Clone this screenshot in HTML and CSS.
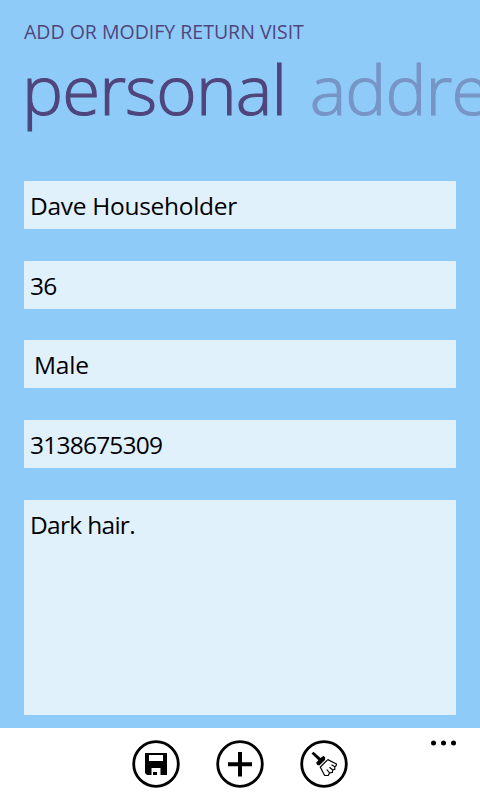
FILE: index.html
```html
<!DOCTYPE html>
<html lang="en">
<head>
<meta charset="utf-8">
<title>Add or modify return visit</title>
<link rel="stylesheet" href="styles.css">
</head>
<body>
<div class="page">
  <header class="header">
    <div class="app-title">ADD OR MODIFY RETURN VISIT</div>
    <nav class="pivot"><span class="pivot-item active">personal</span><span class="pivot-item next">addre</span></nav>
  </header>
  <main class="form">
    <div class="field"><span class="name">Dave Householder</span></div>
    <div class="field"><span class="number">36</span></div>
    <div class="field select"><span class="choice">Male</span></div>
    <div class="field"><span class="number">3138675309</span></div>
    <div class="field notes"><span class="note">Dark hair.</span></div>
  </main>
  <footer class="appbar">
    <svg class="icon" viewBox="0 0 48 48"><circle cx="24" cy="24" r="22.3"/><path class="solid" fill-rule="evenodd" d="M13 13H35V35H15L13 33ZM17 15V21H31V15ZM19.5 28V35H28.5V28ZM21 32H25V35H21Z"/></svg>
    <svg class="icon" viewBox="0 0 48 48"><circle cx="24" cy="24" r="22.3"/><path class="solid" d="M22 12H26V22.2H36V26.2H26V36.4H22V26.2H12V22.2H22Z"/></svg>
    <svg class="icon" viewBox="0 0 48 48"><circle cx="24" cy="24" r="22.3"/><path class="solid" d="M11.5 13.5L13.5 11.7L20.5 18L23.5 15.8L25.2 17.5L25 20L19.3 25.5L17 24.8L16.2 22.5L18.4 20.2Z"/><path class="line" d="M27.8 19.6L36.5 24L36 26L34.8 26.8L34.8 29.3L32.8 30L32.3 32.4L29.6 33L28.2 35.3L24.6 35.5L20.3 27L27.8 19.6M34.8 26.8L31.5 24.8M32.8 30L29.5 27.2M29.6 33L26.8 29.5"/></svg>
    <svg class="more" viewBox="0 0 26 6"><circle cx="3.5" cy="3" r="2.5"/><circle cx="13.5" cy="3" r="2.5"/><circle cx="23.5" cy="3" r="2.5"/></svg>
  </footer>
</div>
</body>
</html>
```
FILE: styles.css
```css
* { box-sizing: border-box; }
body { margin: 0; font-family: "Open Sans", "Noto Sans", sans-serif; }
.page { width: 480px; height: 800px; overflow: hidden; display: flex; flex-direction: column; background: #8fcbf8; }
.header { height: 181px; padding: 20px 0 0 24px; color: #4f457c; white-space: nowrap; }
.app-title { font-size: 19.5px; line-height: 24px; letter-spacing: 0; }
.pivot { display: flex; gap: 23.5px; margin-top: 4px; }
.pivot-item { font-size: 69px; line-height: 80px; font-weight: 300; letter-spacing: -0.9px; -webkit-text-stroke: 1.1px currentColor; }
.active { margin-left: -2px; }
.next { color: #7795c6; letter-spacing: -0.9px; }
.form { height: 547px; padding: 0 24px; display: grid; grid-template-rows: 48px 48px 48px 48px 215px; row-gap: 31.7px; }
.field { background: #e1f1fc; color: #000; padding: 1px 6px 0; font-size: 24.5px; line-height: 48px; white-space: nowrap; }
.name { letter-spacing: -0.3px; }
.number { letter-spacing: -0.78px; }
.choice { letter-spacing: -0.2px; }
.note { letter-spacing: -0.7px; }
.select { padding-left: 10px; }
.appbar { position: relative; height: 72px; background: #fff; display: flex; justify-content: center; gap: 36px; padding-top: 12px; }
.icon { width: 48px; height: 48px; }
.icon circle { fill: none; stroke: #000; stroke-width: 2.8; }
.solid { fill: #000; }
.line { fill: none; stroke: #000; stroke-width: 1.2; }
.more { position: absolute; left: 430px; top: 12px; width: 26px; height: 6px; }
```
